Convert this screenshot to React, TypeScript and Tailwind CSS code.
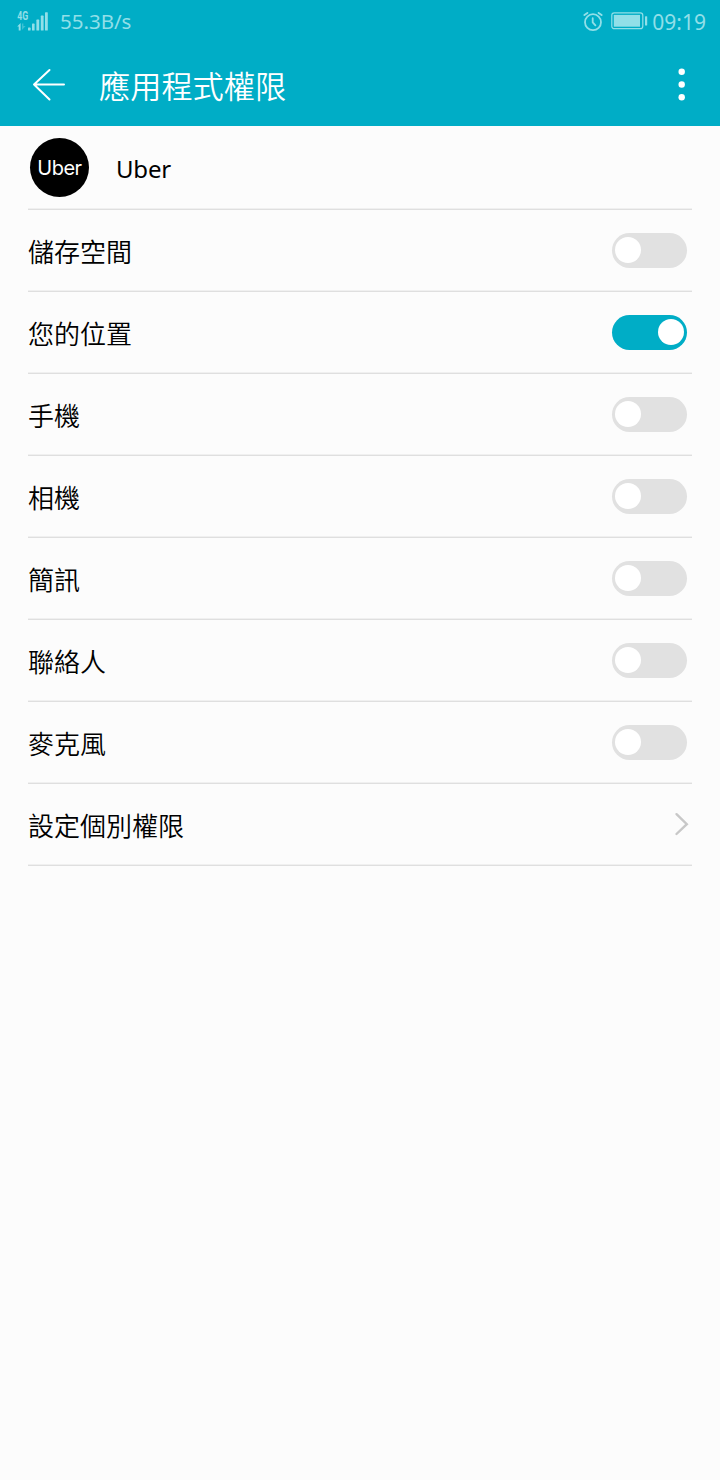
import { useState } from "react";

const PERMISSIONS = [
  { name: "儲存空間", enabled: false },
  { name: "您的位置", enabled: true },
  { name: "手機", enabled: false },
  { name: "相機", enabled: false },
  { name: "簡訊", enabled: false },
  { name: "聯絡人", enabled: false },
  { name: "麥克風", enabled: false },
];

function SignalIcon() {
  return (
    <svg width="34" height="25" viewBox="0 0 34 25" fill="currentColor" aria-hidden="true">
      <text
        x="1.2"
        y="11"
        textLength="11"
        lengthAdjust="spacingAndGlyphs"
        className="font-['Roboto',sans-serif] text-[12px] font-bold"
      >
        4G
      </text>
      {/* data arrows */}
      <path d="M1.2 17.4L4.6 14V21.5H2.7V17.4Z" />
      <path d="M6 14.5H7.4V17H9.6L6 21Z" opacity="0.4" />
      <rect x="12" y="18.6" width="2.6" height="3" rx="0.6" />
      <rect x="16" y="14.6" width="2.6" height="7" rx="0.6" />
      <rect x="20.4" y="10.6" width="2.8" height="11" rx="0.6" />
      <rect x="24.8" y="6.6" width="2.8" height="15" rx="0.6" />
      <rect x="29" y="3.2" width="2.8" height="18.4" rx="0.6" />
    </svg>
  );
}

function AlarmIcon() {
  return (
    <svg
      width="20"
      height="20"
      viewBox="0 0 20 20"
      fill="none"
      stroke="currentColor"
      strokeWidth="1.8"
      strokeLinecap="round"
      aria-hidden="true"
    >
      <circle cx="10" cy="10.2" r="8" />
      <path d="M9.7 6.2V10.3L12.4 13.3M1.4 3.1L4.4 0.9M18.6 3.1L15.6 0.9" />
    </svg>
  );
}

function BatteryIcon() {
  return (
    <svg width="37" height="19" viewBox="0 0 37 19" fill="none" aria-hidden="true">
      <rect x="0.8" y="0.9" width="31" height="15.8" rx="2.5" stroke="currentColor" strokeWidth="1.2" />
      <rect x="2.8" y="2.9" width="26.2" height="11.8" fill="currentColor" />
      <rect x="34" y="4.2" width="2.2" height="9.4" rx="0.5" fill="currentColor" />
    </svg>
  );
}

function StatusBar() {
  return (
    <div className="flex h-[43px] items-center justify-between pl-4 pr-3.5 text-[#91dfe8]">
      <div className="flex items-center">
        <SignalIcon />
        <span className="ml-2.5 text-[20.5px] leading-none">55.3B/s</span>
      </div>
      <div className="flex items-center">
        <AlarmIcon />
        <span className="ml-2">
          <BatteryIcon />
        </span>
        <span className="ml-1 pt-px text-[21px] leading-none">09:19</span>
      </div>
    </div>
  );
}

function TitleBar() {
  return (
    <div className="flex h-[83px] items-center pl-8 pr-[34px] text-white">
      <button aria-label="Back">
        <svg
          width="34"
          height="34"
          viewBox="0 0 34 34"
          fill="none"
          stroke="currentColor"
          strokeWidth="2"
          strokeLinecap="round"
          strokeLinejoin="round"
        >
          <path d="M17.5 2L2 16.5L17.5 31.5M2 16.5H32" />
        </svg>
      </button>
      <h1 className="ml-[33px] flex-1 pt-[5px] text-[31.2px] font-[350] leading-none">應用程式權限</h1>
      <button aria-label="More options">
        <svg width="8" height="34" viewBox="0 0 8 34" fill="currentColor">
          <circle cx="3.7" cy="3.7" r="3.2" />
          <circle cx="3.7" cy="16.5" r="3.2" />
          <circle cx="3.7" cy="29.2" r="3.2" />
        </svg>
      </button>
    </div>
  );
}

function Toggle({ label, defaultOn }: { label: string; defaultOn: boolean }) {
  const [on, setOn] = useState(defaultOn);

  return (
    <button
      role="switch"
      aria-checked={on}
      aria-label={label}
      onClick={() => setOn((v) => !v)}
      className={`flex h-[35px] w-[75px] items-center rounded-full px-[3px] ${
        on ? "justify-end bg-[#00adc6]" : "justify-start bg-[#e1e1e1]"
      }`}
    >
      <span className="size-[26px] rounded-full bg-white" />
    </button>
  );
}

export default function App() {
  return (
    <div className="min-h-[1480px] w-full bg-[#fcfcfc] font-['Noto_Sans','Noto_Sans_CJK_TC',sans-serif] text-black">
      <header className="bg-[#00adc6]">
        <StatusBar />
        <TitleBar />
      </header>

      <main className="px-7">
        <div className="flex h-[84px] items-center border-b border-[#dfdfdf] pb-px pl-0.5 shadow-[inset_0_-1px_0_#f0f0f0]">
          <div className="flex size-[59px] items-center justify-center rounded-full bg-black pt-px font-['Inter','Liberation_Sans',sans-serif] text-[20px] tracking-[-0.5px] text-white">
            Uber
          </div>
          <span className="ml-[27px] pt-[3px] text-[24px] tracking-[-0.2px]">Uber</span>
        </div>

        {PERMISSIONS.map((p) => (
          <div
            key={p.name}
            className="flex h-[82px] items-center justify-between border-b border-[#dfdfdf] pb-px pr-[5px] shadow-[inset_0_-1px_0_#f0f0f0]"
          >
            <span className="pt-[5px] text-[26px] font-[350]">{p.name}</span>
            <Toggle label={p.name} defaultOn={p.enabled} />
          </div>
        ))}

        <div className="flex h-[82px] items-center justify-between border-b border-[#dfdfdf] pb-px pr-[3px] shadow-[inset_0_-1px_0_#f0f0f0]">
          <span className="pt-[5px] text-[26px] font-[350]">設定個別權限</span>
          <svg
            width="15"
            height="24"
            viewBox="0 0 15 24"
            fill="none"
            stroke="#c8c8c8"
            strokeWidth="2.4"
            strokeLinecap="round"
            aria-hidden="true"
          >
            <path d="M2.5 2.2L12.8 12.2L2.5 22" />
          </svg>
        </div>
      </main>
    </div>
  );
}
